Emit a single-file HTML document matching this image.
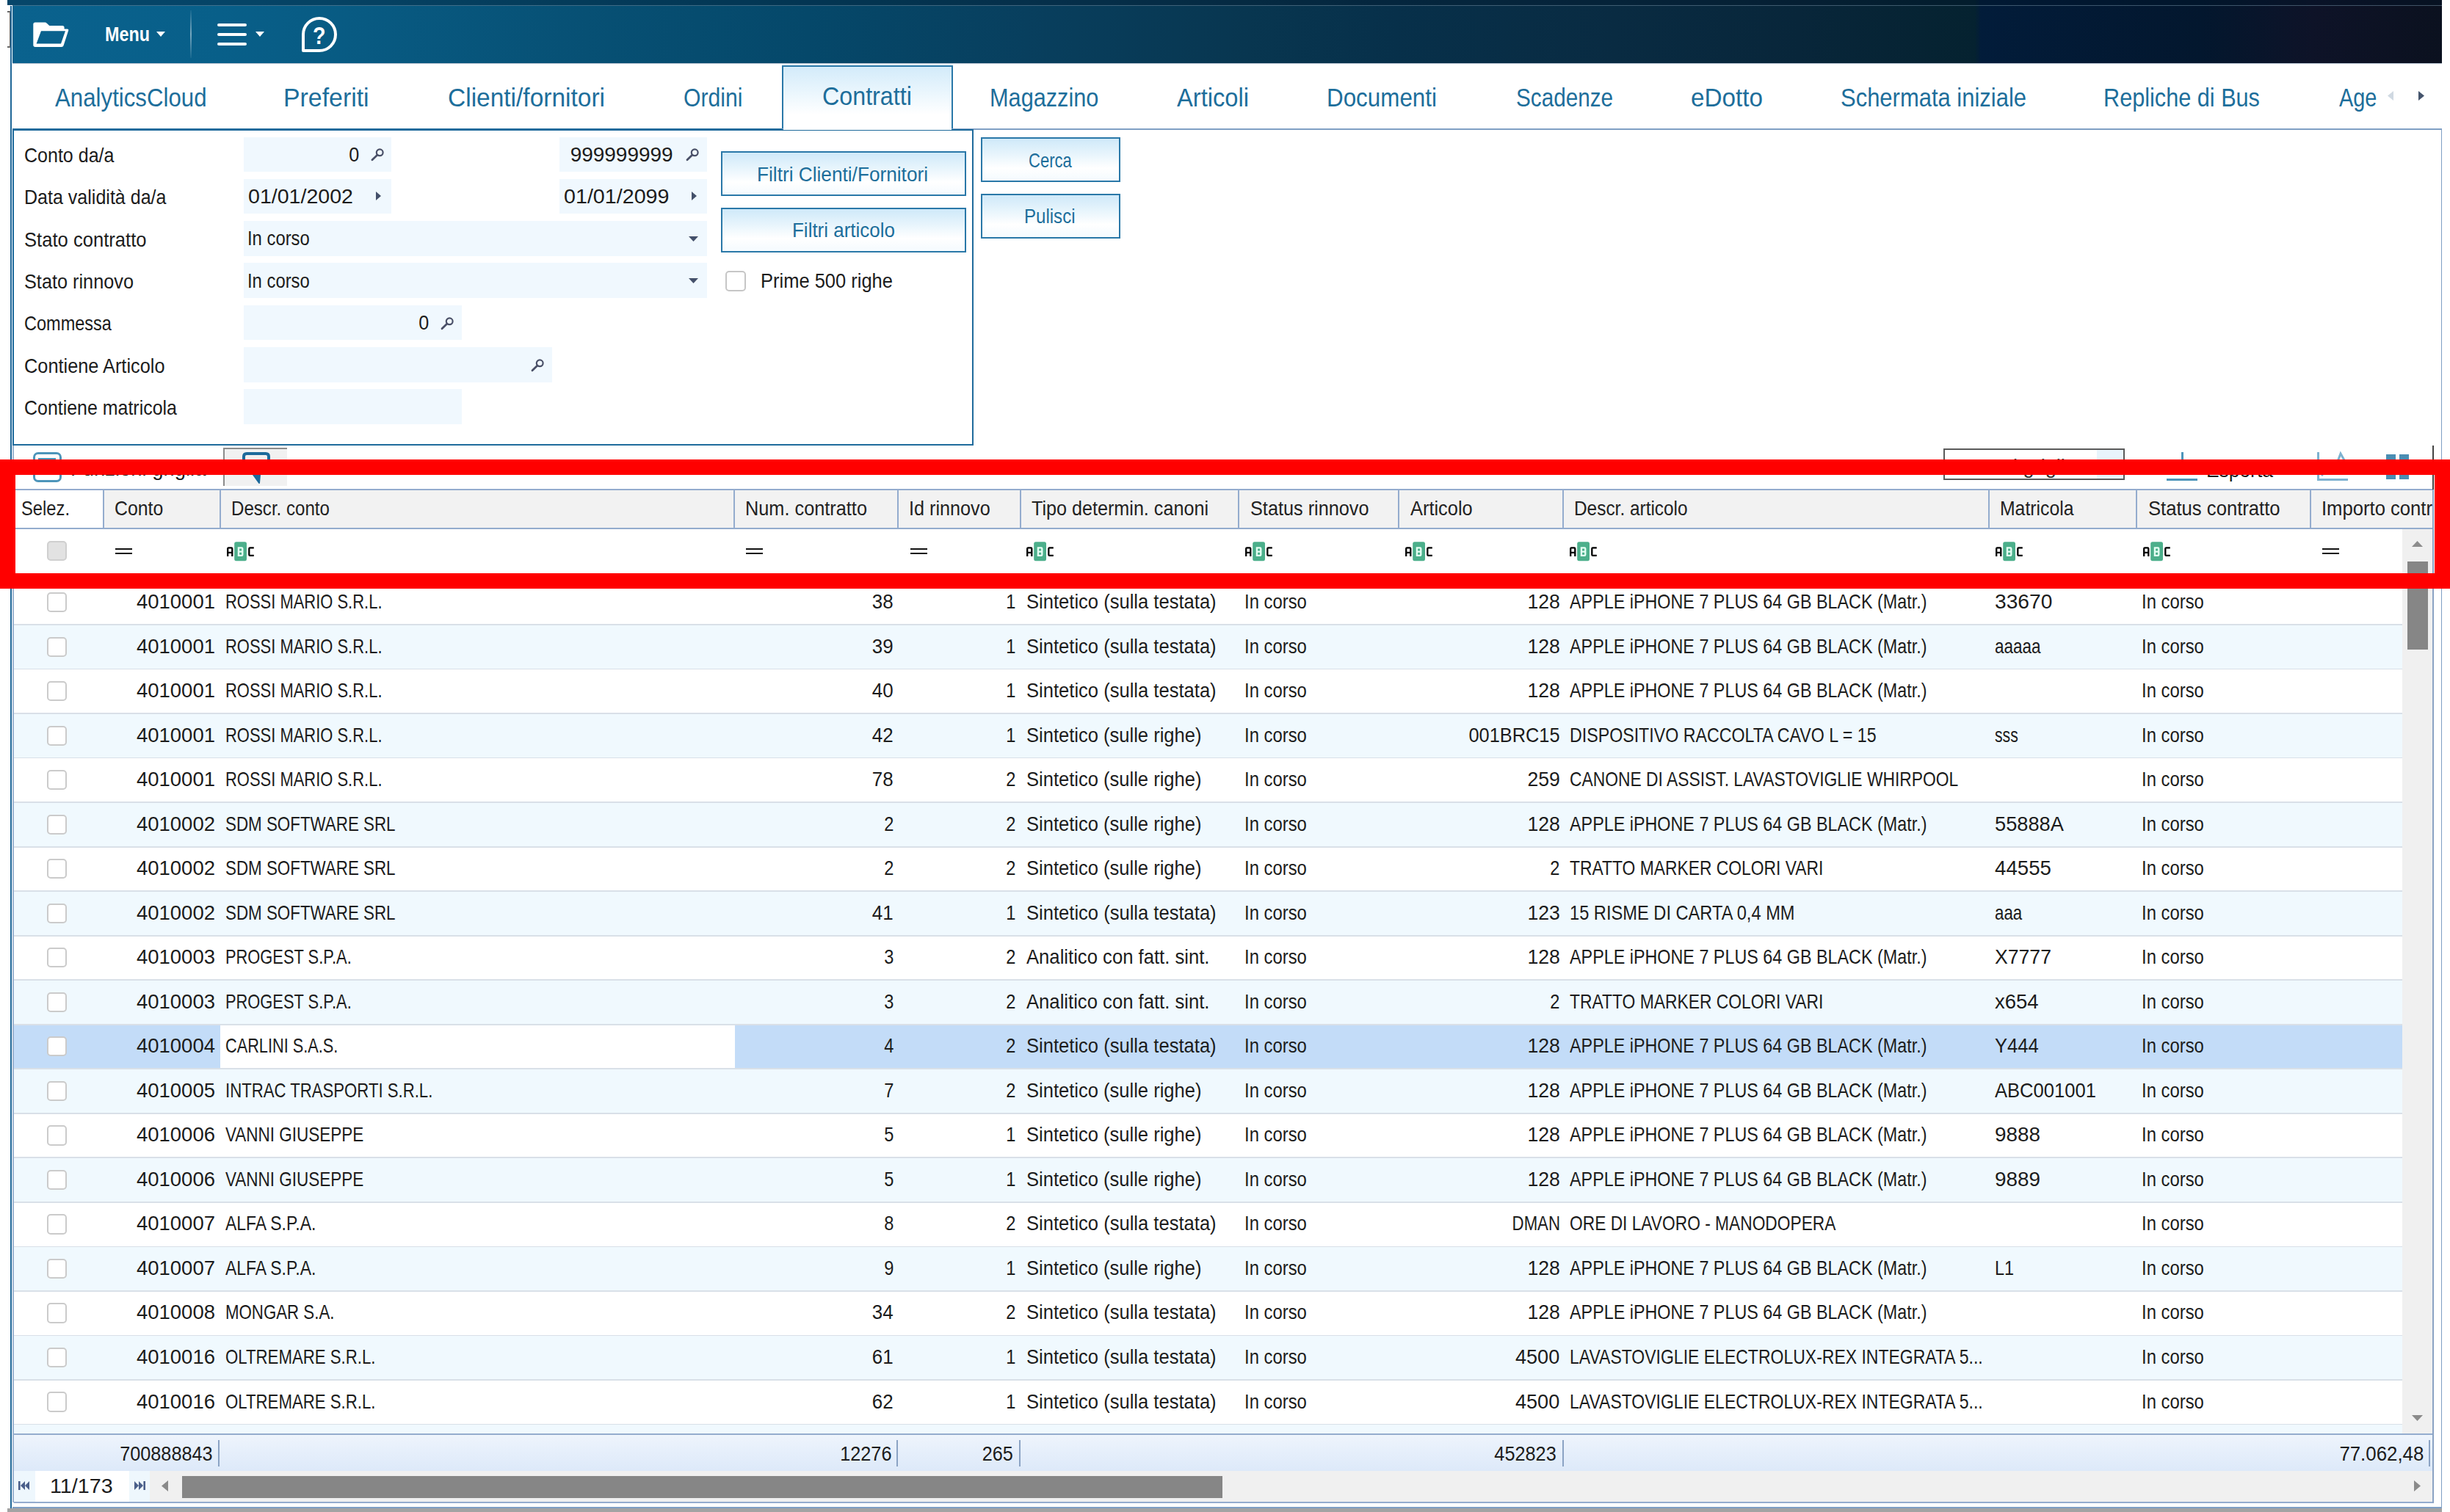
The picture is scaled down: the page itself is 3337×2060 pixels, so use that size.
<!DOCTYPE html>
<html><head><meta charset="utf-8"><title>Contratti</title>
<style>
html,body{margin:0;padding:0;background:#fff;}
body{width:3337px;height:2060px;position:relative;overflow:hidden;font-family:"Liberation Sans",sans-serif;}
div,span.t,svg{position:absolute;box-sizing:border-box;}
span.t{white-space:nowrap;line-height:1;display:block;}
</style></head><body>
<div style="left:10px;top:0px;width:3316px;height:86px;background:linear-gradient(90deg,rgb(10,98,142) 7px,rgb(8,95,137) 290px,rgb(8,90,130) 490px,rgb(7,80,116) 790px,rgb(5,72,106) 1090px,rgb(8,63,94) 1390px,rgb(8,54,80) 1690px,rgb(7,48,74) 1890px,rgb(9,43,66) 2190px,rgb(8,38,58) 2440px,rgb(5,34,48) 2680px,rgb(2,28,58) 2688px,rgb(3,23,46) 2990px,rgb(14,19,40) 3140px,rgb(11,17,31) 3316px);"></div>
<div style="left:10px;top:0px;width:3316px;height:7.5px;background:rgba(0,20,40,.35);border-bottom:1.5px solid rgba(150,180,200,.4);"></div>
<div style="left:10px;top:7px;width:7px;height:79px;background:#fff;"></div>
<div style="left:10px;top:14.5px;width:4.8px;height:50px;border:2px solid #666;border-left:none;background:#fff;"></div>
<svg style="left:40px;top:26px" width="60" height="44" viewBox="40 26 60 44"><path fill-rule="evenodd" fill="#fff" d="M45.3 33.3 Q45.3 30.5 48 30.5 L61.5 30.5 Q62.6 30.5 63.5 31.4 L67.3 35 L85 35 Q87.6 35 87.6 37.6 L87.6 39.5 L91.5 39.5 Q93.8 39.5 93.2 41.6 L86.6 62 Q86 64 83.8 64 L48 64 Q45.3 64 45.3 61.3 Z M56 42.3 L49.6 59.6 L83 59.6 L89 42.3 Z"/></svg>
<span class="t" style="top:33.6px;font-size:27px;color:#fff;font-weight:bold;left:143.0px;transform-origin:0 0;transform:scaleX(0.8656);">Menu</span>
<svg style="left:213px;top:43px" width="12" height="7"><path d="M0 0 L12 0 L6 7 Z" fill="#fff"/></svg>
<div style="left:259px;top:14px;width:2px;height:65px;background:linear-gradient(180deg,rgba(255,255,255,.05),rgba(255,255,255,.45) 50%,rgba(255,255,255,.05));"></div>
<div style="left:296px;top:32.3px;width:40px;height:4.1px;background:#fff;border-radius:2px;"></div>
<div style="left:296px;top:45.3px;width:40px;height:4.1px;background:#fff;border-radius:2px;"></div>
<div style="left:296px;top:58.3px;width:40px;height:4.1px;background:#fff;border-radius:2px;"></div>
<svg style="left:348px;top:43px" width="12" height="7"><path d="M0 0 L12 0 L6 7 Z" fill="#fff"/></svg>
<svg style="left:408px;top:21px" width="54" height="54" viewBox="0 0 54 54"><path d="M5 47 L5 26 A22 22 0 1 1 27 48 L5 48 Z" fill="none" stroke="#fff" stroke-width="4" stroke-linejoin="round"/></svg>
<span class="t" style="top:31.7px;font-size:33px;color:#fff;font-weight:bold;left:426.3px;transform-origin:0 0;transform:scaleX(0.8693);">?</span>
<div style="left:1065px;top:89px;width:233px;height:89px;border:2px solid #2a78a8;border-bottom:none;background:linear-gradient(180deg,#d3ebfa 0%,#eaf6fd 40%,#ffffff 75%);"></div>
<span class="t" style="top:116.1px;font-size:34.5px;color:#1d6e9b;left:75.0px;transform-origin:0 0;transform:scaleX(0.9053);">AnalyticsCloud</span>
<span class="t" style="top:116.1px;font-size:34.5px;color:#1d6e9b;left:386.4px;transform-origin:0 0;transform:scaleX(0.9810);">Preferiti</span>
<span class="t" style="top:116.1px;font-size:34.5px;color:#1d6e9b;left:609.8px;transform-origin:0 0;transform:scaleX(0.9707);">Clienti/fornitori</span>
<span class="t" style="top:116.1px;font-size:34.5px;color:#1d6e9b;left:931.0px;transform-origin:0 0;transform:scaleX(0.8728);">Ordini</span>
<span class="t" style="top:114.0px;font-size:34.5px;color:#1d6e9b;left:1119.7px;transform-origin:0 0;transform:scaleX(0.9347);">Contratti</span>
<span class="t" style="top:116.1px;font-size:34.5px;color:#1d6e9b;left:1348.4px;transform-origin:0 0;transform:scaleX(0.8896);">Magazzino</span>
<span class="t" style="top:116.1px;font-size:34.5px;color:#1d6e9b;left:1602.6px;transform-origin:0 0;transform:scaleX(0.9469);">Articoli</span>
<span class="t" style="top:116.1px;font-size:34.5px;color:#1d6e9b;left:1807.0px;transform-origin:0 0;transform:scaleX(0.9096);">Documenti</span>
<span class="t" style="top:116.1px;font-size:34.5px;color:#1d6e9b;left:2064.5px;transform-origin:0 0;transform:scaleX(0.8611);">Scadenze</span>
<span class="t" style="top:116.1px;font-size:34.5px;color:#1d6e9b;left:2303.0px;transform-origin:0 0;transform:scaleX(0.9645);">eDotto</span>
<span class="t" style="top:116.1px;font-size:34.5px;color:#1d6e9b;left:2507.0px;transform-origin:0 0;transform:scaleX(0.8976);">Schermata iniziale</span>
<span class="t" style="top:116.1px;font-size:34.5px;color:#1d6e9b;left:2865.0px;transform-origin:0 0;transform:scaleX(0.8883);">Repliche di Bus</span>
<span class="t" style="top:116.1px;font-size:34.5px;color:#1d6e9b;left:3185.6px;transform-origin:0 0;transform:scaleX(0.8370);">Age</span>
<svg style="left:3252px;top:124px" width="8" height="13"><path d="M8 0 L8 13 L0 6.5 Z" fill="#d0d9e2"/></svg>
<svg style="left:3293.6px;top:124px" width="8" height="13"><path d="M0 0 L0 13 L8 6.5 Z" fill="#44546c"/></svg>
<div style="left:17px;top:86px;width:3309px;height:1.2px;background:#b3bfce;"></div>
<div style="left:17px;top:175px;width:3309px;height:2px;background:#7f9fc4;"></div>
<div style="left:17px;top:175px;width:1048px;height:3px;background:#1f6b9c;"></div>
<div style="left:17px;top:176px;width:1309px;height:431px;border:2.5px solid #1f6b9c;background:#fff;"></div>
<div style="left:1067px;top:175px;width:229px;height:4px;background:#fff;"></div>
<div style="left:1067px;top:176.5px;width:229px;height:1.2px;background:#1f6b9c;"></div>
<span class="t" style="top:198.1px;font-size:27.5px;color:#1c1c1c;left:33.3px;transform-origin:0 0;transform:scaleX(0.9100);">Conto da/a</span>
<span class="t" style="top:255.4px;font-size:27.5px;color:#1c1c1c;left:33.3px;transform-origin:0 0;transform:scaleX(0.9103);">Data validità da/a</span>
<span class="t" style="top:312.7px;font-size:27.5px;color:#1c1c1c;left:33.3px;transform-origin:0 0;transform:scaleX(0.9308);">Stato contratto</span>
<span class="t" style="top:370.0px;font-size:27.5px;color:#1c1c1c;left:33.3px;transform-origin:0 0;transform:scaleX(0.9191);">Stato rinnovo</span>
<span class="t" style="top:427.3px;font-size:27.5px;color:#1c1c1c;left:33.3px;transform-origin:0 0;transform:scaleX(0.8552);">Commessa</span>
<span class="t" style="top:484.6px;font-size:27.5px;color:#1c1c1c;left:33.3px;transform-origin:0 0;transform:scaleX(0.9211);">Contiene Articolo</span>
<span class="t" style="top:541.9px;font-size:27.5px;color:#1c1c1c;left:33.3px;transform-origin:0 0;transform:scaleX(0.9069);">Contiene matricola</span>
<div style="left:332px;top:186.5px;width:201px;height:47.5px;background:#f0f8fe;"></div>
<div style="left:762px;top:186.5px;width:200.5px;height:47.5px;background:#f0f8fe;"></div>
<div style="left:332px;top:243.8px;width:201px;height:47.5px;background:#f0f8fe;"></div>
<div style="left:762px;top:243.8px;width:200.5px;height:47.5px;background:#f0f8fe;"></div>
<div style="left:332px;top:301.1px;width:630.5px;height:47.5px;background:#f0f8fe;"></div>
<div style="left:332px;top:358.4px;width:630.5px;height:47.5px;background:#f0f8fe;"></div>
<div style="left:332px;top:415.7px;width:296.5px;height:47.5px;background:#f0f8fe;"></div>
<div style="left:332px;top:473px;width:420px;height:47.5px;background:#f0f8fe;"></div>
<div style="left:332px;top:530.3px;width:296.5px;height:47.5px;background:#f0f8fe;"></div>
<span class="t" style="top:196.7px;font-size:27.5px;color:#1c1c1c;right:2848.0px;transform-origin:100% 0;transform:scaleX(0.9173);">0</span>
<svg style="left:503.5px;top:201.4px" width="20" height="20" viewBox="0 0 20 20"><circle cx="13.2" cy="6.8" r="4.4" fill="none" stroke="#4a5068" stroke-width="2.2"/><path d="M10 10 L3 16.8" stroke="#4a5068" stroke-width="2.8" stroke-linecap="round"/></svg>
<span class="t" style="top:196.7px;font-size:27.5px;color:#1c1c1c;right:2420.0px;transform-origin:100% 0;transform:scaleX(1.0172);">999999999</span>
<svg style="left:932.8px;top:201.4px" width="20" height="20" viewBox="0 0 20 20"><circle cx="13.2" cy="6.8" r="4.4" fill="none" stroke="#4a5068" stroke-width="2.2"/><path d="M10 10 L3 16.8" stroke="#4a5068" stroke-width="2.8" stroke-linecap="round"/></svg>
<span class="t" style="top:254.0px;font-size:27.5px;color:#1c1c1c;left:338.0px;transform-origin:0 0;transform:scaleX(1.0390);">01/01/2002</span>
<svg style="left:512px;top:261px" width="8" height="12"><path d="M0 0 L0 12 L7 6 Z" fill="#44506a"/></svg>
<span class="t" style="top:254.0px;font-size:27.5px;color:#1c1c1c;left:767.5px;transform-origin:0 0;transform:scaleX(1.0426);">01/01/2099</span>
<svg style="left:941.5px;top:261px" width="8" height="12"><path d="M0 0 L0 12 L7 6 Z" fill="#44506a"/></svg>
<span class="t" style="top:311.3px;font-size:27.5px;color:#1c1c1c;left:337.0px;transform-origin:0 0;transform:scaleX(0.8664);">In corso</span>
<svg style="left:938px;top:321.5px" width="13" height="7"><path d="M0 0 L13 0 L6.5 7 Z" fill="#44506a"/></svg>
<span class="t" style="top:368.6px;font-size:27.5px;color:#1c1c1c;left:337.0px;transform-origin:0 0;transform:scaleX(0.8664);">In corso</span>
<svg style="left:938px;top:379px" width="13" height="7"><path d="M0 0 L13 0 L6.5 7 Z" fill="#44506a"/></svg>
<span class="t" style="top:425.9px;font-size:27.5px;color:#1c1c1c;right:2753.0px;transform-origin:100% 0;transform:scaleX(0.9173);">0</span>
<svg style="left:598.5px;top:430.6px" width="20" height="20" viewBox="0 0 20 20"><circle cx="13.2" cy="6.8" r="4.4" fill="none" stroke="#4a5068" stroke-width="2.2"/><path d="M10 10 L3 16.8" stroke="#4a5068" stroke-width="2.8" stroke-linecap="round"/></svg>
<svg style="left:722.3px;top:487.9px" width="20" height="20" viewBox="0 0 20 20"><circle cx="13.2" cy="6.8" r="4.4" fill="none" stroke="#4a5068" stroke-width="2.2"/><path d="M10 10 L3 16.8" stroke="#4a5068" stroke-width="2.8" stroke-linecap="round"/></svg>
<div style="left:982px;top:206px;width:334px;height:61px;border:2px solid #2a78a8;background:linear-gradient(180deg,#cfe9f9 0%,#e6f4fc 35%,#ffffff 70%,#f4fafe 100%);"></div>
<span class="t" style="top:224.4px;font-size:27.5px;color:#1d6e9b;left:1031.0px;transform-origin:0 0;transform:scaleX(0.9531);">Filtri Clienti/Fornitori</span>
<div style="left:982px;top:282.5px;width:334px;height:61px;border:2px solid #2a78a8;background:linear-gradient(180deg,#cfe9f9 0%,#e6f4fc 35%,#ffffff 70%,#f4fafe 100%);"></div>
<span class="t" style="top:300.3px;font-size:27.5px;color:#1d6e9b;left:1079.0px;transform-origin:0 0;transform:scaleX(0.9445);">Filtri articolo</span>
<div style="left:1335.5px;top:187px;width:190.5px;height:61px;border:2px solid #2a78a8;background:linear-gradient(180deg,#cfe9f9 0%,#e6f4fc 35%,#ffffff 70%,#f4fafe 100%);"></div>
<span class="t" style="top:204.5px;font-size:27.5px;color:#1d6e9b;left:1400.8px;transform-origin:0 0;transform:scaleX(0.8008);">Cerca</span>
<div style="left:1335.5px;top:263.5px;width:190.5px;height:61px;border:2px solid #2a78a8;background:linear-gradient(180deg,#cfe9f9 0%,#e6f4fc 35%,#ffffff 70%,#f4fafe 100%);"></div>
<span class="t" style="top:280.7px;font-size:27.5px;color:#1d6e9b;left:1395.0px;transform-origin:0 0;transform:scaleX(0.8745);">Pulisci</span>
<div style="left:988px;top:369px;width:28px;height:28px;border:2px solid #c6c6c6;border-radius:5px;background:#fff;"></div>
<span class="t" style="top:368.7px;font-size:27.5px;color:#1c1c1c;left:1036.0px;transform-origin:0 0;transform:scaleX(0.9271);">Prime 500 righe</span>
<div style="left:44.5px;top:615.5px;width:39.5px;height:41.5px;border:3.5px solid #4d95ba;border-radius:7px;background:#fff;"></div>
<div style="left:52px;top:624px;width:24px;height:3px;background:#4d95ba;"></div>
<span class="t" style="top:625.3px;font-size:27.5px;color:#1c1c1c;left:95.5px;transform-origin:0 0;transform:scaleX(0.9969);">Funzioni griglia</span>
<div style="left:304px;top:610px;width:87px;height:52px;background:#f1f1f1;border-top:2px solid #8c8c8c;border-left:2px solid #8c8c8c;"></div>
<svg style="left:326px;top:614px" width="46" height="48" viewBox="0 0 46 48"><path d="M6 22 L6 8 Q6 4 10 4 L36 4 Q40 4 40 8 L40 22" fill="none" stroke="#1c6a9b" stroke-width="4"/><path d="M17 30 L27 44 L28 33 Z" fill="#1c6a9b" stroke="#1c6a9b" stroke-width="2" stroke-linejoin="round"/></svg>
<div style="left:2646.5px;top:610.5px;width:247.5px;height:43.5px;border:2px solid #5a5a5a;background:#fff;"></div>
<div style="left:2856px;top:613px;width:36px;height:38.5px;background:#e8f4fc;"></div>
<span class="t" style="top:621.7px;font-size:27.5px;color:#333;left:2656.0px;transform-origin:0 0;transform:scaleX(0.9865);">Scenari griglia</span>
<div style="left:2951px;top:651.5px;width:42px;height:3px;background:#4d95ba;"></div>
<div style="left:2971px;top:616px;width:3px;height:30px;background:#4d95ba;"></div>
<span class="t" style="top:626.7px;font-size:27.5px;color:#1c1c1c;left:3005.0px;transform-origin:0 0;transform:scaleX(0.9592);">Esporta</span>
<div style="left:3156px;top:616px;width:3px;height:39px;background:#7db2d0;"></div>
<div style="left:3156px;top:652px;width:42px;height:3px;background:#7db2d0;"></div>
<svg style="left:3160px;top:612px" width="40" height="40"><path d="M2 36 L12 24 L19 30 L28 6 L37 22" fill="none" stroke="#7db2d0" stroke-width="3"/></svg>
<div style="left:3250px;top:618.5px;width:13px;height:16px;background:#4a8db3;"></div>
<div style="left:3268px;top:618.5px;width:13px;height:16px;background:#4a8db3;"></div>
<div style="left:3250px;top:637px;width:13px;height:16px;background:#4a8db3;"></div>
<div style="left:3268px;top:637px;width:13px;height:16px;background:#4a8db3;"></div>
<div style="left:19px;top:666px;width:3295px;height:55px;background:#f2f2f2;border-top:2px solid #94acce;border-bottom:2px solid #94acce;"></div>
<div style="left:19px;top:668px;width:121px;height:51px;background:#fff;"></div>
<div style="left:139.5px;top:667px;width:2px;height:53px;background:#94acce;"></div>
<div style="left:299px;top:667px;width:2px;height:53px;background:#94acce;"></div>
<div style="left:998.7px;top:667px;width:2px;height:53px;background:#94acce;"></div>
<div style="left:1221.5px;top:667px;width:2px;height:53px;background:#94acce;"></div>
<div style="left:1388.5px;top:667px;width:2px;height:53px;background:#94acce;"></div>
<div style="left:1686.3px;top:667px;width:2px;height:53px;background:#94acce;"></div>
<div style="left:1904.3px;top:667px;width:2px;height:53px;background:#94acce;"></div>
<div style="left:2128.3px;top:667px;width:2px;height:53px;background:#94acce;"></div>
<div style="left:2708px;top:667px;width:2px;height:53px;background:#94acce;"></div>
<div style="left:2908.8px;top:667px;width:2px;height:53px;background:#94acce;"></div>
<div style="left:3146px;top:667px;width:2px;height:53px;background:#94acce;"></div>
<span class="t" style="top:678.9px;font-size:27.5px;color:#222;left:29.4px;transform-origin:0 0;transform:scaleX(0.8633);">Selez.</span>
<span class="t" style="top:678.9px;font-size:27.5px;color:#222;left:155.7px;transform-origin:0 0;transform:scaleX(0.9030);">Conto</span>
<span class="t" style="top:678.9px;font-size:27.5px;color:#222;left:315.0px;transform-origin:0 0;transform:scaleX(0.8764);">Descr. conto</span>
<span class="t" style="top:678.9px;font-size:27.5px;color:#222;left:1015.0px;transform-origin:0 0;transform:scaleX(0.9202);">Num. contratto</span>
<span class="t" style="top:678.9px;font-size:27.5px;color:#222;left:1237.7px;transform-origin:0 0;transform:scaleX(0.9170);">Id rinnovo</span>
<span class="t" style="top:678.9px;font-size:27.5px;color:#222;left:1404.7px;transform-origin:0 0;transform:scaleX(0.9148);">Tipo determin. canoni</span>
<span class="t" style="top:678.9px;font-size:27.5px;color:#222;left:1703.0px;transform-origin:0 0;transform:scaleX(0.9189);">Status rinnovo</span>
<span class="t" style="top:678.9px;font-size:27.5px;color:#222;left:1921.0px;transform-origin:0 0;transform:scaleX(0.9235);">Articolo</span>
<span class="t" style="top:678.9px;font-size:27.5px;color:#222;left:2144.0px;transform-origin:0 0;transform:scaleX(0.8874);">Descr. articolo</span>
<span class="t" style="top:678.9px;font-size:27.5px;color:#222;left:2724.0px;transform-origin:0 0;transform:scaleX(0.9001);">Matricola</span>
<span class="t" style="top:678.9px;font-size:27.5px;color:#222;left:2926.0px;transform-origin:0 0;transform:scaleX(0.9323);">Status contratto</span>
<div style="left:3148px;top:668px;width:166px;height:51px;overflow:hidden;">
<span class="t" style="top:10.9px;font-size:27.5px;color:#222;left:14.0px;transform-origin:0 0;transform:scaleX(0.9322);">Importo contratto</span>
</div>
<div style="left:19px;top:721px;width:3253px;height:69px;background:#fff;"></div>
<div style="left:64px;top:737px;width:27px;height:27px;background:#e2e2e2;border:2px solid #cfcfcf;border-radius:5px;"></div>
<div style="left:157px;top:746.5px;width:23px;height:2.6px;background:#111;"></div>
<div style="left:157px;top:752.8px;width:23px;height:2.6px;background:#111;"></div>
<div style="left:1016px;top:746.5px;width:23px;height:2.6px;background:#111;"></div>
<div style="left:1016px;top:752.8px;width:23px;height:2.6px;background:#111;"></div>
<div style="left:1239.5px;top:746.5px;width:23px;height:2.6px;background:#111;"></div>
<div style="left:1239.5px;top:752.8px;width:23px;height:2.6px;background:#111;"></div>
<div style="left:3163px;top:746.5px;width:23px;height:2.6px;background:#111;"></div>
<div style="left:3163px;top:752.8px;width:23px;height:2.6px;background:#111;"></div>
<svg style="left:308.6px;top:737.5px" width="38" height="27" viewBox="0 0 38 27"><rect x="10.2" y="0.3" width="16.8" height="26" rx="2.5" fill="#4caf8b"/><g fill="none" stroke-width="2.3"><path stroke="#000" d="M1.2 19.9 L1.2 9.5 Q1.2 8.4 2.3 8.4 L6.2 8.4 Q7.3 8.4 7.3 9.5 L7.3 19.9 M1.2 14.8 L7.3 14.8"/><path stroke="#e4fff3" d="M15.9 8.4 L20.2 8.4 Q21.3 8.4 21.3 9.5 L21.3 17.7 Q21.3 18.8 20.2 18.8 L15.9 18.8 Z M15.9 13.6 L21.3 13.6"/><path stroke="#000" d="M36.8 8.4 L31.4 8.4 Q30.3 8.4 30.3 9.5 L30.3 17.7 Q30.3 18.8 31.4 18.8 L36.8 18.8"/></g></svg>
<svg style="left:1398px;top:737.5px" width="38" height="27" viewBox="0 0 38 27"><rect x="10.2" y="0.3" width="16.8" height="26" rx="2.5" fill="#4caf8b"/><g fill="none" stroke-width="2.3"><path stroke="#000" d="M1.2 19.9 L1.2 9.5 Q1.2 8.4 2.3 8.4 L6.2 8.4 Q7.3 8.4 7.3 9.5 L7.3 19.9 M1.2 14.8 L7.3 14.8"/><path stroke="#e4fff3" d="M15.9 8.4 L20.2 8.4 Q21.3 8.4 21.3 9.5 L21.3 17.7 Q21.3 18.8 20.2 18.8 L15.9 18.8 Z M15.9 13.6 L21.3 13.6"/><path stroke="#000" d="M36.8 8.4 L31.4 8.4 Q30.3 8.4 30.3 9.5 L30.3 17.7 Q30.3 18.8 31.4 18.8 L36.8 18.8"/></g></svg>
<svg style="left:1696px;top:737.5px" width="38" height="27" viewBox="0 0 38 27"><rect x="10.2" y="0.3" width="16.8" height="26" rx="2.5" fill="#4caf8b"/><g fill="none" stroke-width="2.3"><path stroke="#000" d="M1.2 19.9 L1.2 9.5 Q1.2 8.4 2.3 8.4 L6.2 8.4 Q7.3 8.4 7.3 9.5 L7.3 19.9 M1.2 14.8 L7.3 14.8"/><path stroke="#e4fff3" d="M15.9 8.4 L20.2 8.4 Q21.3 8.4 21.3 9.5 L21.3 17.7 Q21.3 18.8 20.2 18.8 L15.9 18.8 Z M15.9 13.6 L21.3 13.6"/><path stroke="#000" d="M36.8 8.4 L31.4 8.4 Q30.3 8.4 30.3 9.5 L30.3 17.7 Q30.3 18.8 31.4 18.8 L36.8 18.8"/></g></svg>
<svg style="left:1914px;top:737.5px" width="38" height="27" viewBox="0 0 38 27"><rect x="10.2" y="0.3" width="16.8" height="26" rx="2.5" fill="#4caf8b"/><g fill="none" stroke-width="2.3"><path stroke="#000" d="M1.2 19.9 L1.2 9.5 Q1.2 8.4 2.3 8.4 L6.2 8.4 Q7.3 8.4 7.3 9.5 L7.3 19.9 M1.2 14.8 L7.3 14.8"/><path stroke="#e4fff3" d="M15.9 8.4 L20.2 8.4 Q21.3 8.4 21.3 9.5 L21.3 17.7 Q21.3 18.8 20.2 18.8 L15.9 18.8 Z M15.9 13.6 L21.3 13.6"/><path stroke="#000" d="M36.8 8.4 L31.4 8.4 Q30.3 8.4 30.3 9.5 L30.3 17.7 Q30.3 18.8 31.4 18.8 L36.8 18.8"/></g></svg>
<svg style="left:2138px;top:737.5px" width="38" height="27" viewBox="0 0 38 27"><rect x="10.2" y="0.3" width="16.8" height="26" rx="2.5" fill="#4caf8b"/><g fill="none" stroke-width="2.3"><path stroke="#000" d="M1.2 19.9 L1.2 9.5 Q1.2 8.4 2.3 8.4 L6.2 8.4 Q7.3 8.4 7.3 9.5 L7.3 19.9 M1.2 14.8 L7.3 14.8"/><path stroke="#e4fff3" d="M15.9 8.4 L20.2 8.4 Q21.3 8.4 21.3 9.5 L21.3 17.7 Q21.3 18.8 20.2 18.8 L15.9 18.8 Z M15.9 13.6 L21.3 13.6"/><path stroke="#000" d="M36.8 8.4 L31.4 8.4 Q30.3 8.4 30.3 9.5 L30.3 17.7 Q30.3 18.8 31.4 18.8 L36.8 18.8"/></g></svg>
<svg style="left:2718px;top:737.5px" width="38" height="27" viewBox="0 0 38 27"><rect x="10.2" y="0.3" width="16.8" height="26" rx="2.5" fill="#4caf8b"/><g fill="none" stroke-width="2.3"><path stroke="#000" d="M1.2 19.9 L1.2 9.5 Q1.2 8.4 2.3 8.4 L6.2 8.4 Q7.3 8.4 7.3 9.5 L7.3 19.9 M1.2 14.8 L7.3 14.8"/><path stroke="#e4fff3" d="M15.9 8.4 L20.2 8.4 Q21.3 8.4 21.3 9.5 L21.3 17.7 Q21.3 18.8 20.2 18.8 L15.9 18.8 Z M15.9 13.6 L21.3 13.6"/><path stroke="#000" d="M36.8 8.4 L31.4 8.4 Q30.3 8.4 30.3 9.5 L30.3 17.7 Q30.3 18.8 31.4 18.8 L36.8 18.8"/></g></svg>
<svg style="left:2918.6px;top:737.5px" width="38" height="27" viewBox="0 0 38 27"><rect x="10.2" y="0.3" width="16.8" height="26" rx="2.5" fill="#4caf8b"/><g fill="none" stroke-width="2.3"><path stroke="#000" d="M1.2 19.9 L1.2 9.5 Q1.2 8.4 2.3 8.4 L6.2 8.4 Q7.3 8.4 7.3 9.5 L7.3 19.9 M1.2 14.8 L7.3 14.8"/><path stroke="#e4fff3" d="M15.9 8.4 L20.2 8.4 Q21.3 8.4 21.3 9.5 L21.3 17.7 Q21.3 18.8 20.2 18.8 L15.9 18.8 Z M15.9 13.6 L21.3 13.6"/><path stroke="#000" d="M36.8 8.4 L31.4 8.4 Q30.3 8.4 30.3 9.5 L30.3 17.7 Q30.3 18.8 31.4 18.8 L36.8 18.8"/></g></svg>
<div style="left:19px;top:790px;width:3253px;height:60.52px;background:#fff;"></div>
<div style="left:63.7px;top:807px;width:27.3px;height:27.3px;border:2px solid #cbcbcb;border-radius:5px;background:#fff;"></div>
<span class="t" style="top:806.1px;font-size:27.5px;color:#1c1c1c;right:3044.0px;transform-origin:100% 0;">4010001</span>
<span class="t" style="top:806.1px;font-size:27.5px;color:#1c1c1c;left:307.3px;transform-origin:0 0;transform:scaleX(0.7983);">ROSSI MARIO S.R.L.</span>
<span class="t" style="top:806.1px;font-size:27.5px;color:#1c1c1c;right:2120.1px;transform-origin:100% 0;transform:scaleX(0.9435);">38</span>
<span class="t" style="top:806.1px;font-size:27.5px;color:#1c1c1c;right:1953.3px;transform-origin:100% 0;transform:scaleX(0.8583);">1</span>
<span class="t" style="top:806.1px;font-size:27.5px;color:#1c1c1c;left:1398.0px;transform-origin:0 0;transform:scaleX(0.9297);">Sintetico (sulla testata)</span>
<span class="t" style="top:806.1px;font-size:27.5px;color:#1c1c1c;left:1694.7px;transform-origin:0 0;transform:scaleX(0.8674);">In corso</span>
<span class="t" style="top:806.1px;font-size:27.5px;color:#1c1c1c;right:1212.5px;transform-origin:100% 0;transform:scaleX(0.9690);">128</span>
<span class="t" style="top:806.1px;font-size:27.5px;color:#1c1c1c;left:2137.6px;transform-origin:0 0;transform:scaleX(0.8487);">APPLE iPHONE 7 PLUS 64 GB BLACK (Matr.)</span>
<span class="t" style="top:806.1px;font-size:27.5px;color:#1c1c1c;left:2717.0px;transform-origin:0 0;transform:scaleX(1.0255);">33670</span>
<span class="t" style="top:806.1px;font-size:27.5px;color:#1c1c1c;left:2917.3px;transform-origin:0 0;transform:scaleX(0.8674);">In corso</span>
<div style="left:19px;top:850.52px;width:3253px;height:60.52px;background:#f0f9fe;"></div>
<div style="left:19px;top:850.22px;width:3253px;height:1.7px;background:#d9e0e8;"></div>
<div style="left:63.7px;top:867.52px;width:27.3px;height:27.3px;border:2px solid #cbcbcb;border-radius:5px;background:#fff;"></div>
<span class="t" style="top:866.6px;font-size:27.5px;color:#1c1c1c;right:3044.0px;transform-origin:100% 0;">4010001</span>
<span class="t" style="top:866.6px;font-size:27.5px;color:#1c1c1c;left:307.3px;transform-origin:0 0;transform:scaleX(0.7983);">ROSSI MARIO S.R.L.</span>
<span class="t" style="top:866.6px;font-size:27.5px;color:#1c1c1c;right:2120.1px;transform-origin:100% 0;transform:scaleX(0.9435);">39</span>
<span class="t" style="top:866.6px;font-size:27.5px;color:#1c1c1c;right:1953.3px;transform-origin:100% 0;transform:scaleX(0.8583);">1</span>
<span class="t" style="top:866.6px;font-size:27.5px;color:#1c1c1c;left:1398.0px;transform-origin:0 0;transform:scaleX(0.9297);">Sintetico (sulla testata)</span>
<span class="t" style="top:866.6px;font-size:27.5px;color:#1c1c1c;left:1694.7px;transform-origin:0 0;transform:scaleX(0.8674);">In corso</span>
<span class="t" style="top:866.6px;font-size:27.5px;color:#1c1c1c;right:1212.5px;transform-origin:100% 0;transform:scaleX(0.9690);">128</span>
<span class="t" style="top:866.6px;font-size:27.5px;color:#1c1c1c;left:2137.6px;transform-origin:0 0;transform:scaleX(0.8487);">APPLE iPHONE 7 PLUS 64 GB BLACK (Matr.)</span>
<span class="t" style="top:866.6px;font-size:27.5px;color:#1c1c1c;left:2717.0px;transform-origin:0 0;transform:scaleX(0.8187);">aaaaa</span>
<span class="t" style="top:866.6px;font-size:27.5px;color:#1c1c1c;left:2917.3px;transform-origin:0 0;transform:scaleX(0.8674);">In corso</span>
<div style="left:19px;top:911.04px;width:3253px;height:60.52px;background:#fff;"></div>
<div style="left:19px;top:910.74px;width:3253px;height:1.7px;background:#d9e0e8;"></div>
<div style="left:63.7px;top:928.04px;width:27.3px;height:27.3px;border:2px solid #cbcbcb;border-radius:5px;background:#fff;"></div>
<span class="t" style="top:927.2px;font-size:27.5px;color:#1c1c1c;right:3044.0px;transform-origin:100% 0;">4010001</span>
<span class="t" style="top:927.2px;font-size:27.5px;color:#1c1c1c;left:307.3px;transform-origin:0 0;transform:scaleX(0.7983);">ROSSI MARIO S.R.L.</span>
<span class="t" style="top:927.2px;font-size:27.5px;color:#1c1c1c;right:2120.1px;transform-origin:100% 0;transform:scaleX(0.9435);">40</span>
<span class="t" style="top:927.2px;font-size:27.5px;color:#1c1c1c;right:1953.3px;transform-origin:100% 0;transform:scaleX(0.8583);">1</span>
<span class="t" style="top:927.2px;font-size:27.5px;color:#1c1c1c;left:1398.0px;transform-origin:0 0;transform:scaleX(0.9297);">Sintetico (sulla testata)</span>
<span class="t" style="top:927.2px;font-size:27.5px;color:#1c1c1c;left:1694.7px;transform-origin:0 0;transform:scaleX(0.8674);">In corso</span>
<span class="t" style="top:927.2px;font-size:27.5px;color:#1c1c1c;right:1212.5px;transform-origin:100% 0;transform:scaleX(0.9690);">128</span>
<span class="t" style="top:927.2px;font-size:27.5px;color:#1c1c1c;left:2137.6px;transform-origin:0 0;transform:scaleX(0.8487);">APPLE iPHONE 7 PLUS 64 GB BLACK (Matr.)</span>
<span class="t" style="top:927.2px;font-size:27.5px;color:#1c1c1c;left:2917.3px;transform-origin:0 0;transform:scaleX(0.8674);">In corso</span>
<div style="left:19px;top:971.56px;width:3253px;height:60.52px;background:#f0f9fe;"></div>
<div style="left:19px;top:971.26px;width:3253px;height:1.7px;background:#d9e0e8;"></div>
<div style="left:63.7px;top:988.56px;width:27.3px;height:27.3px;border:2px solid #cbcbcb;border-radius:5px;background:#fff;"></div>
<span class="t" style="top:987.7px;font-size:27.5px;color:#1c1c1c;right:3044.0px;transform-origin:100% 0;">4010001</span>
<span class="t" style="top:987.7px;font-size:27.5px;color:#1c1c1c;left:307.3px;transform-origin:0 0;transform:scaleX(0.7983);">ROSSI MARIO S.R.L.</span>
<span class="t" style="top:987.7px;font-size:27.5px;color:#1c1c1c;right:2120.1px;transform-origin:100% 0;transform:scaleX(0.9435);">42</span>
<span class="t" style="top:987.7px;font-size:27.5px;color:#1c1c1c;right:1953.3px;transform-origin:100% 0;transform:scaleX(0.8583);">1</span>
<span class="t" style="top:987.7px;font-size:27.5px;color:#1c1c1c;left:1398.0px;transform-origin:0 0;transform:scaleX(0.9286);">Sintetico (sulle righe)</span>
<span class="t" style="top:987.7px;font-size:27.5px;color:#1c1c1c;left:1694.7px;transform-origin:0 0;transform:scaleX(0.8674);">In corso</span>
<span class="t" style="top:987.7px;font-size:27.5px;color:#1c1c1c;right:1212.4px;transform-origin:100% 0;transform:scaleX(0.9221);">001BRC15</span>
<span class="t" style="top:987.7px;font-size:27.5px;color:#1c1c1c;left:2137.6px;transform-origin:0 0;transform:scaleX(0.8437);">DISPOSITIVO RACCOLTA CAVO L = 15</span>
<span class="t" style="top:987.7px;font-size:27.5px;color:#1c1c1c;left:2717.0px;transform-origin:0 0;transform:scaleX(0.7709);">sss</span>
<span class="t" style="top:987.7px;font-size:27.5px;color:#1c1c1c;left:2917.3px;transform-origin:0 0;transform:scaleX(0.8674);">In corso</span>
<div style="left:19px;top:1032.08px;width:3253px;height:60.52px;background:#fff;"></div>
<div style="left:19px;top:1031.78px;width:3253px;height:1.7px;background:#d9e0e8;"></div>
<div style="left:63.7px;top:1049.08px;width:27.3px;height:27.3px;border:2px solid #cbcbcb;border-radius:5px;background:#fff;"></div>
<span class="t" style="top:1048.2px;font-size:27.5px;color:#1c1c1c;right:3044.0px;transform-origin:100% 0;">4010001</span>
<span class="t" style="top:1048.2px;font-size:27.5px;color:#1c1c1c;left:307.3px;transform-origin:0 0;transform:scaleX(0.7983);">ROSSI MARIO S.R.L.</span>
<span class="t" style="top:1048.2px;font-size:27.5px;color:#1c1c1c;right:2120.1px;transform-origin:100% 0;transform:scaleX(0.9435);">78</span>
<span class="t" style="top:1048.2px;font-size:27.5px;color:#1c1c1c;right:1953.3px;transform-origin:100% 0;transform:scaleX(0.8583);">2</span>
<span class="t" style="top:1048.2px;font-size:27.5px;color:#1c1c1c;left:1398.0px;transform-origin:0 0;transform:scaleX(0.9286);">Sintetico (sulle righe)</span>
<span class="t" style="top:1048.2px;font-size:27.5px;color:#1c1c1c;left:1694.7px;transform-origin:0 0;transform:scaleX(0.8674);">In corso</span>
<span class="t" style="top:1048.2px;font-size:27.5px;color:#1c1c1c;right:1212.5px;transform-origin:100% 0;transform:scaleX(0.9690);">259</span>
<span class="t" style="top:1048.2px;font-size:27.5px;color:#1c1c1c;left:2137.6px;transform-origin:0 0;transform:scaleX(0.8305);">CANONE DI ASSIST. LAVASTOVIGLIE WHIRPOOL</span>
<span class="t" style="top:1048.2px;font-size:27.5px;color:#1c1c1c;left:2917.3px;transform-origin:0 0;transform:scaleX(0.8674);">In corso</span>
<div style="left:19px;top:1092.6px;width:3253px;height:60.52px;background:#f0f9fe;"></div>
<div style="left:19px;top:1092.3px;width:3253px;height:1.7px;background:#d9e0e8;"></div>
<div style="left:63.7px;top:1109.6px;width:27.3px;height:27.3px;border:2px solid #cbcbcb;border-radius:5px;background:#fff;"></div>
<span class="t" style="top:1108.7px;font-size:27.5px;color:#1c1c1c;right:3044.0px;transform-origin:100% 0;">4010002</span>
<span class="t" style="top:1108.7px;font-size:27.5px;color:#1c1c1c;left:307.3px;transform-origin:0 0;transform:scaleX(0.8133);">SDM SOFTWARE SRL</span>
<span class="t" style="top:1108.7px;font-size:27.5px;color:#1c1c1c;right:2120.2px;transform-origin:100% 0;transform:scaleX(0.8583);">2</span>
<span class="t" style="top:1108.7px;font-size:27.5px;color:#1c1c1c;right:1953.3px;transform-origin:100% 0;transform:scaleX(0.8583);">2</span>
<span class="t" style="top:1108.7px;font-size:27.5px;color:#1c1c1c;left:1398.0px;transform-origin:0 0;transform:scaleX(0.9286);">Sintetico (sulle righe)</span>
<span class="t" style="top:1108.7px;font-size:27.5px;color:#1c1c1c;left:1694.7px;transform-origin:0 0;transform:scaleX(0.8674);">In corso</span>
<span class="t" style="top:1108.7px;font-size:27.5px;color:#1c1c1c;right:1212.5px;transform-origin:100% 0;transform:scaleX(0.9690);">128</span>
<span class="t" style="top:1108.7px;font-size:27.5px;color:#1c1c1c;left:2137.6px;transform-origin:0 0;transform:scaleX(0.8487);">APPLE iPHONE 7 PLUS 64 GB BLACK (Matr.)</span>
<span class="t" style="top:1108.7px;font-size:27.5px;color:#1c1c1c;left:2717.0px;transform-origin:0 0;transform:scaleX(0.9908);">55888A</span>
<span class="t" style="top:1108.7px;font-size:27.5px;color:#1c1c1c;left:2917.3px;transform-origin:0 0;transform:scaleX(0.8674);">In corso</span>
<div style="left:19px;top:1153.12px;width:3253px;height:60.52px;background:#fff;"></div>
<div style="left:19px;top:1152.82px;width:3253px;height:1.7px;background:#d9e0e8;"></div>
<div style="left:63.7px;top:1170.12px;width:27.3px;height:27.3px;border:2px solid #cbcbcb;border-radius:5px;background:#fff;"></div>
<span class="t" style="top:1169.2px;font-size:27.5px;color:#1c1c1c;right:3044.0px;transform-origin:100% 0;">4010002</span>
<span class="t" style="top:1169.2px;font-size:27.5px;color:#1c1c1c;left:307.3px;transform-origin:0 0;transform:scaleX(0.8133);">SDM SOFTWARE SRL</span>
<span class="t" style="top:1169.2px;font-size:27.5px;color:#1c1c1c;right:2120.2px;transform-origin:100% 0;transform:scaleX(0.8583);">2</span>
<span class="t" style="top:1169.2px;font-size:27.5px;color:#1c1c1c;right:1953.3px;transform-origin:100% 0;transform:scaleX(0.8583);">2</span>
<span class="t" style="top:1169.2px;font-size:27.5px;color:#1c1c1c;left:1398.0px;transform-origin:0 0;transform:scaleX(0.9286);">Sintetico (sulle righe)</span>
<span class="t" style="top:1169.2px;font-size:27.5px;color:#1c1c1c;left:1694.7px;transform-origin:0 0;transform:scaleX(0.8674);">In corso</span>
<span class="t" style="top:1169.2px;font-size:27.5px;color:#1c1c1c;right:1212.5px;transform-origin:100% 0;transform:scaleX(0.8583);">2</span>
<span class="t" style="top:1169.2px;font-size:27.5px;color:#1c1c1c;left:2137.6px;transform-origin:0 0;transform:scaleX(0.8312);">TRATTO MARKER COLORI VARI</span>
<span class="t" style="top:1169.2px;font-size:27.5px;color:#1c1c1c;left:2717.0px;transform-origin:0 0;transform:scaleX(1.0059);">44555</span>
<span class="t" style="top:1169.2px;font-size:27.5px;color:#1c1c1c;left:2917.3px;transform-origin:0 0;transform:scaleX(0.8674);">In corso</span>
<div style="left:19px;top:1213.64px;width:3253px;height:60.52px;background:#f0f9fe;"></div>
<div style="left:19px;top:1213.34px;width:3253px;height:1.7px;background:#d9e0e8;"></div>
<div style="left:63.7px;top:1230.64px;width:27.3px;height:27.3px;border:2px solid #cbcbcb;border-radius:5px;background:#fff;"></div>
<span class="t" style="top:1229.8px;font-size:27.5px;color:#1c1c1c;right:3044.0px;transform-origin:100% 0;">4010002</span>
<span class="t" style="top:1229.8px;font-size:27.5px;color:#1c1c1c;left:307.3px;transform-origin:0 0;transform:scaleX(0.8133);">SDM SOFTWARE SRL</span>
<span class="t" style="top:1229.8px;font-size:27.5px;color:#1c1c1c;right:2120.1px;transform-origin:100% 0;transform:scaleX(0.9435);">41</span>
<span class="t" style="top:1229.8px;font-size:27.5px;color:#1c1c1c;right:1953.3px;transform-origin:100% 0;transform:scaleX(0.8583);">1</span>
<span class="t" style="top:1229.8px;font-size:27.5px;color:#1c1c1c;left:1398.0px;transform-origin:0 0;transform:scaleX(0.9297);">Sintetico (sulla testata)</span>
<span class="t" style="top:1229.8px;font-size:27.5px;color:#1c1c1c;left:1694.7px;transform-origin:0 0;transform:scaleX(0.8674);">In corso</span>
<span class="t" style="top:1229.8px;font-size:27.5px;color:#1c1c1c;right:1212.5px;transform-origin:100% 0;transform:scaleX(0.9690);">123</span>
<span class="t" style="top:1229.8px;font-size:27.5px;color:#1c1c1c;left:2137.6px;transform-origin:0 0;transform:scaleX(0.8597);">15 RISME DI CARTA 0,4 MM</span>
<span class="t" style="top:1229.8px;font-size:27.5px;color:#1c1c1c;left:2717.0px;transform-origin:0 0;transform:scaleX(0.8100);">aaa</span>
<span class="t" style="top:1229.8px;font-size:27.5px;color:#1c1c1c;left:2917.3px;transform-origin:0 0;transform:scaleX(0.8674);">In corso</span>
<div style="left:19px;top:1274.16px;width:3253px;height:60.52px;background:#fff;"></div>
<div style="left:19px;top:1273.86px;width:3253px;height:1.7px;background:#d9e0e8;"></div>
<div style="left:63.7px;top:1291.16px;width:27.3px;height:27.3px;border:2px solid #cbcbcb;border-radius:5px;background:#fff;"></div>
<span class="t" style="top:1290.3px;font-size:27.5px;color:#1c1c1c;right:3044.0px;transform-origin:100% 0;">4010003</span>
<span class="t" style="top:1290.3px;font-size:27.5px;color:#1c1c1c;left:307.3px;transform-origin:0 0;transform:scaleX(0.7949);">PROGEST S.P.A.</span>
<span class="t" style="top:1290.3px;font-size:27.5px;color:#1c1c1c;right:2120.2px;transform-origin:100% 0;transform:scaleX(0.8583);">3</span>
<span class="t" style="top:1290.3px;font-size:27.5px;color:#1c1c1c;right:1953.3px;transform-origin:100% 0;transform:scaleX(0.8583);">2</span>
<span class="t" style="top:1290.3px;font-size:27.5px;color:#1c1c1c;left:1398.0px;transform-origin:0 0;transform:scaleX(0.9326);">Analitico con fatt. sint.</span>
<span class="t" style="top:1290.3px;font-size:27.5px;color:#1c1c1c;left:1694.7px;transform-origin:0 0;transform:scaleX(0.8674);">In corso</span>
<span class="t" style="top:1290.3px;font-size:27.5px;color:#1c1c1c;right:1212.5px;transform-origin:100% 0;transform:scaleX(0.9690);">128</span>
<span class="t" style="top:1290.3px;font-size:27.5px;color:#1c1c1c;left:2137.6px;transform-origin:0 0;transform:scaleX(0.8487);">APPLE iPHONE 7 PLUS 64 GB BLACK (Matr.)</span>
<span class="t" style="top:1290.3px;font-size:27.5px;color:#1c1c1c;left:2717.0px;transform-origin:0 0;transform:scaleX(0.9676);">X7777</span>
<span class="t" style="top:1290.3px;font-size:27.5px;color:#1c1c1c;left:2917.3px;transform-origin:0 0;transform:scaleX(0.8674);">In corso</span>
<div style="left:19px;top:1334.68px;width:3253px;height:60.52px;background:#f0f9fe;"></div>
<div style="left:19px;top:1334.38px;width:3253px;height:1.7px;background:#d9e0e8;"></div>
<div style="left:63.7px;top:1351.68px;width:27.3px;height:27.3px;border:2px solid #cbcbcb;border-radius:5px;background:#fff;"></div>
<span class="t" style="top:1350.8px;font-size:27.5px;color:#1c1c1c;right:3044.0px;transform-origin:100% 0;">4010003</span>
<span class="t" style="top:1350.8px;font-size:27.5px;color:#1c1c1c;left:307.3px;transform-origin:0 0;transform:scaleX(0.7949);">PROGEST S.P.A.</span>
<span class="t" style="top:1350.8px;font-size:27.5px;color:#1c1c1c;right:2120.2px;transform-origin:100% 0;transform:scaleX(0.8583);">3</span>
<span class="t" style="top:1350.8px;font-size:27.5px;color:#1c1c1c;right:1953.3px;transform-origin:100% 0;transform:scaleX(0.8583);">2</span>
<span class="t" style="top:1350.8px;font-size:27.5px;color:#1c1c1c;left:1398.0px;transform-origin:0 0;transform:scaleX(0.9326);">Analitico con fatt. sint.</span>
<span class="t" style="top:1350.8px;font-size:27.5px;color:#1c1c1c;left:1694.7px;transform-origin:0 0;transform:scaleX(0.8674);">In corso</span>
<span class="t" style="top:1350.8px;font-size:27.5px;color:#1c1c1c;right:1212.5px;transform-origin:100% 0;transform:scaleX(0.8583);">2</span>
<span class="t" style="top:1350.8px;font-size:27.5px;color:#1c1c1c;left:2137.6px;transform-origin:0 0;transform:scaleX(0.8312);">TRATTO MARKER COLORI VARI</span>
<span class="t" style="top:1350.8px;font-size:27.5px;color:#1c1c1c;left:2717.0px;transform-origin:0 0;">x654</span>
<span class="t" style="top:1350.8px;font-size:27.5px;color:#1c1c1c;left:2917.3px;transform-origin:0 0;transform:scaleX(0.8674);">In corso</span>
<div style="left:19px;top:1395.2px;width:3253px;height:60.52px;background:#c3dcf8;"></div>
<div style="left:300px;top:1396.2px;width:700.5px;height:59.52px;background:#fff;"></div>
<div style="left:19px;top:1394.9px;width:3253px;height:1.7px;background:#d9e0e8;"></div>
<div style="left:63.7px;top:1412.2px;width:27.3px;height:27.3px;border:2px solid #cbcbcb;border-radius:5px;background:#fff;"></div>
<span class="t" style="top:1411.3px;font-size:27.5px;color:#1c1c1c;right:3044.0px;transform-origin:100% 0;">4010004</span>
<span class="t" style="top:1411.3px;font-size:27.5px;color:#1c1c1c;left:307.3px;transform-origin:0 0;transform:scaleX(0.7901);">CARLINI S.A.S.</span>
<span class="t" style="top:1411.3px;font-size:27.5px;color:#1c1c1c;right:2120.2px;transform-origin:100% 0;transform:scaleX(0.8583);">4</span>
<span class="t" style="top:1411.3px;font-size:27.5px;color:#1c1c1c;right:1953.3px;transform-origin:100% 0;transform:scaleX(0.8583);">2</span>
<span class="t" style="top:1411.3px;font-size:27.5px;color:#1c1c1c;left:1398.0px;transform-origin:0 0;transform:scaleX(0.9297);">Sintetico (sulla testata)</span>
<span class="t" style="top:1411.3px;font-size:27.5px;color:#1c1c1c;left:1694.7px;transform-origin:0 0;transform:scaleX(0.8674);">In corso</span>
<span class="t" style="top:1411.3px;font-size:27.5px;color:#1c1c1c;right:1212.5px;transform-origin:100% 0;transform:scaleX(0.9690);">128</span>
<span class="t" style="top:1411.3px;font-size:27.5px;color:#1c1c1c;left:2137.6px;transform-origin:0 0;transform:scaleX(0.8487);">APPLE iPHONE 7 PLUS 64 GB BLACK (Matr.)</span>
<span class="t" style="top:1411.3px;font-size:27.5px;color:#1c1c1c;left:2717.0px;transform-origin:0 0;transform:scaleX(0.9313);">Y444</span>
<span class="t" style="top:1411.3px;font-size:27.5px;color:#1c1c1c;left:2917.3px;transform-origin:0 0;transform:scaleX(0.8674);">In corso</span>
<div style="left:19px;top:1455.72px;width:3253px;height:60.52px;background:#f0f9fe;"></div>
<div style="left:19px;top:1455.42px;width:3253px;height:1.7px;background:#d9e0e8;"></div>
<div style="left:63.7px;top:1472.72px;width:27.3px;height:27.3px;border:2px solid #cbcbcb;border-radius:5px;background:#fff;"></div>
<span class="t" style="top:1471.8px;font-size:27.5px;color:#1c1c1c;right:3044.0px;transform-origin:100% 0;">4010005</span>
<span class="t" style="top:1471.8px;font-size:27.5px;color:#1c1c1c;left:307.3px;transform-origin:0 0;transform:scaleX(0.8057);">INTRAC TRASPORTI S.R.L.</span>
<span class="t" style="top:1471.8px;font-size:27.5px;color:#1c1c1c;right:2120.2px;transform-origin:100% 0;transform:scaleX(0.8583);">7</span>
<span class="t" style="top:1471.8px;font-size:27.5px;color:#1c1c1c;right:1953.3px;transform-origin:100% 0;transform:scaleX(0.8583);">2</span>
<span class="t" style="top:1471.8px;font-size:27.5px;color:#1c1c1c;left:1398.0px;transform-origin:0 0;transform:scaleX(0.9286);">Sintetico (sulle righe)</span>
<span class="t" style="top:1471.8px;font-size:27.5px;color:#1c1c1c;left:1694.7px;transform-origin:0 0;transform:scaleX(0.8674);">In corso</span>
<span class="t" style="top:1471.8px;font-size:27.5px;color:#1c1c1c;right:1212.5px;transform-origin:100% 0;transform:scaleX(0.9690);">128</span>
<span class="t" style="top:1471.8px;font-size:27.5px;color:#1c1c1c;left:2137.6px;transform-origin:0 0;transform:scaleX(0.8487);">APPLE iPHONE 7 PLUS 64 GB BLACK (Matr.)</span>
<span class="t" style="top:1471.8px;font-size:27.5px;color:#1c1c1c;left:2717.0px;transform-origin:0 0;transform:scaleX(0.9302);">ABC001001</span>
<span class="t" style="top:1471.8px;font-size:27.5px;color:#1c1c1c;left:2917.3px;transform-origin:0 0;transform:scaleX(0.8674);">In corso</span>
<div style="left:19px;top:1516.24px;width:3253px;height:60.52px;background:#fff;"></div>
<div style="left:19px;top:1515.94px;width:3253px;height:1.7px;background:#d9e0e8;"></div>
<div style="left:63.7px;top:1533.24px;width:27.3px;height:27.3px;border:2px solid #cbcbcb;border-radius:5px;background:#fff;"></div>
<span class="t" style="top:1532.4px;font-size:27.5px;color:#1c1c1c;right:3044.0px;transform-origin:100% 0;">4010006</span>
<span class="t" style="top:1532.4px;font-size:27.5px;color:#1c1c1c;left:307.3px;transform-origin:0 0;transform:scaleX(0.8180);">VANNI GIUSEPPE</span>
<span class="t" style="top:1532.4px;font-size:27.5px;color:#1c1c1c;right:2120.2px;transform-origin:100% 0;transform:scaleX(0.8583);">5</span>
<span class="t" style="top:1532.4px;font-size:27.5px;color:#1c1c1c;right:1953.3px;transform-origin:100% 0;transform:scaleX(0.8583);">1</span>
<span class="t" style="top:1532.4px;font-size:27.5px;color:#1c1c1c;left:1398.0px;transform-origin:0 0;transform:scaleX(0.9286);">Sintetico (sulle righe)</span>
<span class="t" style="top:1532.4px;font-size:27.5px;color:#1c1c1c;left:1694.7px;transform-origin:0 0;transform:scaleX(0.8674);">In corso</span>
<span class="t" style="top:1532.4px;font-size:27.5px;color:#1c1c1c;right:1212.5px;transform-origin:100% 0;transform:scaleX(0.9690);">128</span>
<span class="t" style="top:1532.4px;font-size:27.5px;color:#1c1c1c;left:2137.6px;transform-origin:0 0;transform:scaleX(0.8487);">APPLE iPHONE 7 PLUS 64 GB BLACK (Matr.)</span>
<span class="t" style="top:1532.4px;font-size:27.5px;color:#1c1c1c;left:2717.0px;transform-origin:0 0;transform:scaleX(1.0133);">9888</span>
<span class="t" style="top:1532.4px;font-size:27.5px;color:#1c1c1c;left:2917.3px;transform-origin:0 0;transform:scaleX(0.8674);">In corso</span>
<div style="left:19px;top:1576.76px;width:3253px;height:60.52px;background:#f0f9fe;"></div>
<div style="left:19px;top:1576.46px;width:3253px;height:1.7px;background:#d9e0e8;"></div>
<div style="left:63.7px;top:1593.76px;width:27.3px;height:27.3px;border:2px solid #cbcbcb;border-radius:5px;background:#fff;"></div>
<span class="t" style="top:1592.9px;font-size:27.5px;color:#1c1c1c;right:3044.0px;transform-origin:100% 0;">4010006</span>
<span class="t" style="top:1592.9px;font-size:27.5px;color:#1c1c1c;left:307.3px;transform-origin:0 0;transform:scaleX(0.8180);">VANNI GIUSEPPE</span>
<span class="t" style="top:1592.9px;font-size:27.5px;color:#1c1c1c;right:2120.2px;transform-origin:100% 0;transform:scaleX(0.8583);">5</span>
<span class="t" style="top:1592.9px;font-size:27.5px;color:#1c1c1c;right:1953.3px;transform-origin:100% 0;transform:scaleX(0.8583);">1</span>
<span class="t" style="top:1592.9px;font-size:27.5px;color:#1c1c1c;left:1398.0px;transform-origin:0 0;transform:scaleX(0.9286);">Sintetico (sulle righe)</span>
<span class="t" style="top:1592.9px;font-size:27.5px;color:#1c1c1c;left:1694.7px;transform-origin:0 0;transform:scaleX(0.8674);">In corso</span>
<span class="t" style="top:1592.9px;font-size:27.5px;color:#1c1c1c;right:1212.5px;transform-origin:100% 0;transform:scaleX(0.9690);">128</span>
<span class="t" style="top:1592.9px;font-size:27.5px;color:#1c1c1c;left:2137.6px;transform-origin:0 0;transform:scaleX(0.8487);">APPLE iPHONE 7 PLUS 64 GB BLACK (Matr.)</span>
<span class="t" style="top:1592.9px;font-size:27.5px;color:#1c1c1c;left:2717.0px;transform-origin:0 0;transform:scaleX(1.0133);">9889</span>
<span class="t" style="top:1592.9px;font-size:27.5px;color:#1c1c1c;left:2917.3px;transform-origin:0 0;transform:scaleX(0.8674);">In corso</span>
<div style="left:19px;top:1637.28px;width:3253px;height:60.52px;background:#fff;"></div>
<div style="left:19px;top:1636.98px;width:3253px;height:1.7px;background:#d9e0e8;"></div>
<div style="left:63.7px;top:1654.28px;width:27.3px;height:27.3px;border:2px solid #cbcbcb;border-radius:5px;background:#fff;"></div>
<span class="t" style="top:1653.4px;font-size:27.5px;color:#1c1c1c;right:3044.0px;transform-origin:100% 0;">4010007</span>
<span class="t" style="top:1653.4px;font-size:27.5px;color:#1c1c1c;left:307.3px;transform-origin:0 0;transform:scaleX(0.8348);">ALFA S.P.A.</span>
<span class="t" style="top:1653.4px;font-size:27.5px;color:#1c1c1c;right:2120.2px;transform-origin:100% 0;transform:scaleX(0.8583);">8</span>
<span class="t" style="top:1653.4px;font-size:27.5px;color:#1c1c1c;right:1953.3px;transform-origin:100% 0;transform:scaleX(0.8583);">2</span>
<span class="t" style="top:1653.4px;font-size:27.5px;color:#1c1c1c;left:1398.0px;transform-origin:0 0;transform:scaleX(0.9297);">Sintetico (sulla testata)</span>
<span class="t" style="top:1653.4px;font-size:27.5px;color:#1c1c1c;left:1694.7px;transform-origin:0 0;transform:scaleX(0.8674);">In corso</span>
<span class="t" style="top:1653.4px;font-size:27.5px;color:#1c1c1c;right:1212.5px;transform-origin:100% 0;transform:scaleX(0.8075);">DMAN</span>
<span class="t" style="top:1653.4px;font-size:27.5px;color:#1c1c1c;left:2137.6px;transform-origin:0 0;transform:scaleX(0.8275);">ORE DI LAVORO - MANODOPERA</span>
<span class="t" style="top:1653.4px;font-size:27.5px;color:#1c1c1c;left:2917.3px;transform-origin:0 0;transform:scaleX(0.8674);">In corso</span>
<div style="left:19px;top:1697.8px;width:3253px;height:60.52px;background:#f0f9fe;"></div>
<div style="left:19px;top:1697.5px;width:3253px;height:1.7px;background:#d9e0e8;"></div>
<div style="left:63.7px;top:1714.8px;width:27.3px;height:27.3px;border:2px solid #cbcbcb;border-radius:5px;background:#fff;"></div>
<span class="t" style="top:1713.9px;font-size:27.5px;color:#1c1c1c;right:3044.0px;transform-origin:100% 0;">4010007</span>
<span class="t" style="top:1713.9px;font-size:27.5px;color:#1c1c1c;left:307.3px;transform-origin:0 0;transform:scaleX(0.8348);">ALFA S.P.A.</span>
<span class="t" style="top:1713.9px;font-size:27.5px;color:#1c1c1c;right:2120.2px;transform-origin:100% 0;transform:scaleX(0.8583);">9</span>
<span class="t" style="top:1713.9px;font-size:27.5px;color:#1c1c1c;right:1953.3px;transform-origin:100% 0;transform:scaleX(0.8583);">1</span>
<span class="t" style="top:1713.9px;font-size:27.5px;color:#1c1c1c;left:1398.0px;transform-origin:0 0;transform:scaleX(0.9286);">Sintetico (sulle righe)</span>
<span class="t" style="top:1713.9px;font-size:27.5px;color:#1c1c1c;left:1694.7px;transform-origin:0 0;transform:scaleX(0.8674);">In corso</span>
<span class="t" style="top:1713.9px;font-size:27.5px;color:#1c1c1c;right:1212.5px;transform-origin:100% 0;transform:scaleX(0.9690);">128</span>
<span class="t" style="top:1713.9px;font-size:27.5px;color:#1c1c1c;left:2137.6px;transform-origin:0 0;transform:scaleX(0.8487);">APPLE iPHONE 7 PLUS 64 GB BLACK (Matr.)</span>
<span class="t" style="top:1713.9px;font-size:27.5px;color:#1c1c1c;left:2717.0px;transform-origin:0 0;transform:scaleX(0.8518);">L1</span>
<span class="t" style="top:1713.9px;font-size:27.5px;color:#1c1c1c;left:2917.3px;transform-origin:0 0;transform:scaleX(0.8674);">In corso</span>
<div style="left:19px;top:1758.32px;width:3253px;height:60.52px;background:#fff;"></div>
<div style="left:19px;top:1758.02px;width:3253px;height:1.7px;background:#d9e0e8;"></div>
<div style="left:63.7px;top:1775.32px;width:27.3px;height:27.3px;border:2px solid #cbcbcb;border-radius:5px;background:#fff;"></div>
<span class="t" style="top:1774.4px;font-size:27.5px;color:#1c1c1c;right:3044.0px;transform-origin:100% 0;">4010008</span>
<span class="t" style="top:1774.4px;font-size:27.5px;color:#1c1c1c;left:307.3px;transform-origin:0 0;transform:scaleX(0.8096);">MONGAR S.A.</span>
<span class="t" style="top:1774.4px;font-size:27.5px;color:#1c1c1c;right:2120.1px;transform-origin:100% 0;transform:scaleX(0.9435);">34</span>
<span class="t" style="top:1774.4px;font-size:27.5px;color:#1c1c1c;right:1953.3px;transform-origin:100% 0;transform:scaleX(0.8583);">2</span>
<span class="t" style="top:1774.4px;font-size:27.5px;color:#1c1c1c;left:1398.0px;transform-origin:0 0;transform:scaleX(0.9297);">Sintetico (sulla testata)</span>
<span class="t" style="top:1774.4px;font-size:27.5px;color:#1c1c1c;left:1694.7px;transform-origin:0 0;transform:scaleX(0.8674);">In corso</span>
<span class="t" style="top:1774.4px;font-size:27.5px;color:#1c1c1c;right:1212.5px;transform-origin:100% 0;transform:scaleX(0.9690);">128</span>
<span class="t" style="top:1774.4px;font-size:27.5px;color:#1c1c1c;left:2137.6px;transform-origin:0 0;transform:scaleX(0.8487);">APPLE iPHONE 7 PLUS 64 GB BLACK (Matr.)</span>
<span class="t" style="top:1774.4px;font-size:27.5px;color:#1c1c1c;left:2917.3px;transform-origin:0 0;transform:scaleX(0.8674);">In corso</span>
<div style="left:19px;top:1818.84px;width:3253px;height:60.52px;background:#f0f9fe;"></div>
<div style="left:19px;top:1818.54px;width:3253px;height:1.7px;background:#d9e0e8;"></div>
<div style="left:63.7px;top:1835.84px;width:27.3px;height:27.3px;border:2px solid #cbcbcb;border-radius:5px;background:#fff;"></div>
<span class="t" style="top:1835.0px;font-size:27.5px;color:#1c1c1c;right:3044.0px;transform-origin:100% 0;">4010016</span>
<span class="t" style="top:1835.0px;font-size:27.5px;color:#1c1c1c;left:307.3px;transform-origin:0 0;transform:scaleX(0.8075);">OLTREMARE S.R.L.</span>
<span class="t" style="top:1835.0px;font-size:27.5px;color:#1c1c1c;right:2120.1px;transform-origin:100% 0;transform:scaleX(0.9435);">61</span>
<span class="t" style="top:1835.0px;font-size:27.5px;color:#1c1c1c;right:1953.3px;transform-origin:100% 0;transform:scaleX(0.8583);">1</span>
<span class="t" style="top:1835.0px;font-size:27.5px;color:#1c1c1c;left:1398.0px;transform-origin:0 0;transform:scaleX(0.9297);">Sintetico (sulla testata)</span>
<span class="t" style="top:1835.0px;font-size:27.5px;color:#1c1c1c;left:1694.7px;transform-origin:0 0;transform:scaleX(0.8674);">In corso</span>
<span class="t" style="top:1835.0px;font-size:27.5px;color:#1c1c1c;right:1212.5px;transform-origin:100% 0;transform:scaleX(0.9839);">4500</span>
<span class="t" style="top:1835.0px;font-size:27.5px;color:#1c1c1c;left:2137.6px;transform-origin:0 0;transform:scaleX(0.8363);">LAVASTOVIGLIE ELECTROLUX-REX INTEGRATA 5...</span>
<span class="t" style="top:1835.0px;font-size:27.5px;color:#1c1c1c;left:2917.3px;transform-origin:0 0;transform:scaleX(0.8674);">In corso</span>
<div style="left:19px;top:1879.36px;width:3253px;height:60.52px;background:#fff;"></div>
<div style="left:19px;top:1879.06px;width:3253px;height:1.7px;background:#d9e0e8;"></div>
<div style="left:63.7px;top:1896.36px;width:27.3px;height:27.3px;border:2px solid #cbcbcb;border-radius:5px;background:#fff;"></div>
<span class="t" style="top:1895.5px;font-size:27.5px;color:#1c1c1c;right:3044.0px;transform-origin:100% 0;">4010016</span>
<span class="t" style="top:1895.5px;font-size:27.5px;color:#1c1c1c;left:307.3px;transform-origin:0 0;transform:scaleX(0.8075);">OLTREMARE S.R.L.</span>
<span class="t" style="top:1895.5px;font-size:27.5px;color:#1c1c1c;right:2120.1px;transform-origin:100% 0;transform:scaleX(0.9435);">62</span>
<span class="t" style="top:1895.5px;font-size:27.5px;color:#1c1c1c;right:1953.3px;transform-origin:100% 0;transform:scaleX(0.8583);">1</span>
<span class="t" style="top:1895.5px;font-size:27.5px;color:#1c1c1c;left:1398.0px;transform-origin:0 0;transform:scaleX(0.9297);">Sintetico (sulla testata)</span>
<span class="t" style="top:1895.5px;font-size:27.5px;color:#1c1c1c;left:1694.7px;transform-origin:0 0;transform:scaleX(0.8674);">In corso</span>
<span class="t" style="top:1895.5px;font-size:27.5px;color:#1c1c1c;right:1212.5px;transform-origin:100% 0;transform:scaleX(0.9839);">4500</span>
<span class="t" style="top:1895.5px;font-size:27.5px;color:#1c1c1c;left:2137.6px;transform-origin:0 0;transform:scaleX(0.8363);">LAVASTOVIGLIE ELECTROLUX-REX INTEGRATA 5...</span>
<span class="t" style="top:1895.5px;font-size:27.5px;color:#1c1c1c;left:2917.3px;transform-origin:0 0;transform:scaleX(0.8674);">In corso</span>
<div style="left:19px;top:1939.88px;width:3253px;height:14.12px;background:#f0f9fe;"></div>
<div style="left:19px;top:1939.58px;width:3253px;height:1.7px;background:#d9e0e8;"></div>
<div style="left:3272px;top:721px;width:41px;height:1233px;background:#f0f0f0;"></div>
<div style="left:3279px;top:764.5px;width:27.5px;height:120.5px;background:#868686;"></div>
<svg style="left:3284.5px;top:737px" width="15" height="8"><path d="M0 8 L15 8 L7.5 0 Z" fill="#8c8c8c"/></svg>
<svg style="left:3284.5px;top:1928px" width="15" height="8"><path d="M0 0 L15 0 L7.5 8 Z" fill="#8a8a8a"/></svg>
<div style="left:19px;top:1953px;width:3295px;height:51px;background:linear-gradient(180deg,#eef4fc 0%,#e6effb 45%,#dde9f9 100%);border-top:2.5px solid #94acce;"></div>
<span class="t" style="top:1966.9px;font-size:27.5px;color:#1c1c1c;right:3047.0px;transform-origin:100% 0;transform:scaleX(0.9191);">700888843</span>
<span class="t" style="top:1966.9px;font-size:27.5px;color:#1c1c1c;right:2123.0px;transform-origin:100% 0;transform:scaleX(0.9196);">12276</span>
<span class="t" style="top:1966.9px;font-size:27.5px;color:#1c1c1c;right:1957.0px;transform-origin:100% 0;transform:scaleX(0.9189);">265</span>
<span class="t" style="top:1966.9px;font-size:27.5px;color:#1c1c1c;right:1216.9px;transform-origin:100% 0;transform:scaleX(0.9203);">452823</span>
<span class="t" style="top:1966.9px;font-size:27.5px;color:#1c1c1c;right:35.5px;transform-origin:100% 0;transform:scaleX(0.9397);">77.062,48</span>
<div style="left:297.4px;top:1962px;width:2px;height:35.5px;background:#8ba3c4;"></div>
<div style="left:1220.5px;top:1962px;width:2px;height:35.5px;background:#8ba3c4;"></div>
<div style="left:1387.5px;top:1962px;width:2px;height:35.5px;background:#8ba3c4;"></div>
<div style="left:2127.5px;top:1962px;width:2px;height:35.5px;background:#8ba3c4;"></div>
<div style="left:3308px;top:1962px;width:2px;height:35.5px;background:#8ba3c4;"></div>
<div style="left:19px;top:2004px;width:3295px;height:42px;background:#f0f0f0;"></div>
<div style="left:19px;top:2004px;width:185px;height:42px;background:#eef7fd;"></div>
<div style="left:47.7px;top:2004px;width:128.6px;height:42px;background:#fff;"></div>
<span class="t" style="top:2011.0px;font-size:27.5px;color:#1c1c1c;left:67.8px;transform-origin:0 0;transform:scaleX(1.0440);">11/173</span>
<svg style="left:25.3px;top:2018px" width="15" height="12"><path d="M0 0 L2.6 0 L2.6 12 L0 12 Z M3 6 L9 0 L9 12 Z M9 6 L15 0 L15 12 Z" fill="#4a5f8a"/></svg>
<svg style="left:182.8px;top:2018px" width="15" height="12"><path d="M0 0 L2.6 0 L2.6 12 L0 12 Z M3 6 L9 0 L9 12 Z M9 6 L15 0 L15 12 Z" fill="#4a5f8a" transform="translate(15,0) scale(-1,1)"/></svg>
<svg style="left:219.5px;top:2017px" width="9" height="15"><path d="M9 0 L9 15 L0 7.5 Z" fill="#8a8a8a"/></svg>
<svg style="left:3287.5px;top:2017px" width="9" height="15"><path d="M0 0 L0 15 L9 7.5 Z" fill="#8a8a8a"/></svg>
<div style="left:248.2px;top:2011px;width:1417px;height:30px;background:#868686;"></div>
<div style="left:19px;top:2045.5px;width:3295px;height:2px;background:#94acce;"></div>
<div style="left:14px;top:8px;width:2.3px;height:2047px;background:#1f6798;"></div>
<div style="left:17.2px;top:607px;width:1.8px;height:1440px;background:#9db4d0;"></div>
<div style="left:3313px;top:606.5px;width:2px;height:1441px;background:#8ba3c4;"></div>
<div style="left:3313px;top:606.5px;width:2px;height:60px;background:#444;"></div>
<div style="left:3324.5px;top:176px;width:1.8px;height:1879px;background:#7f9fc4;"></div>
<div style="left:17px;top:2053px;width:3309px;height:2px;background:#7f9fc4;"></div>
<div style="left:10px;top:2055px;width:3316px;height:5px;background:#a3a3a3;"></div>
<div style="left:0px;top:626px;width:3337px;height:175.5px;border:21px solid #ff0000;"></div>
</body></html>
